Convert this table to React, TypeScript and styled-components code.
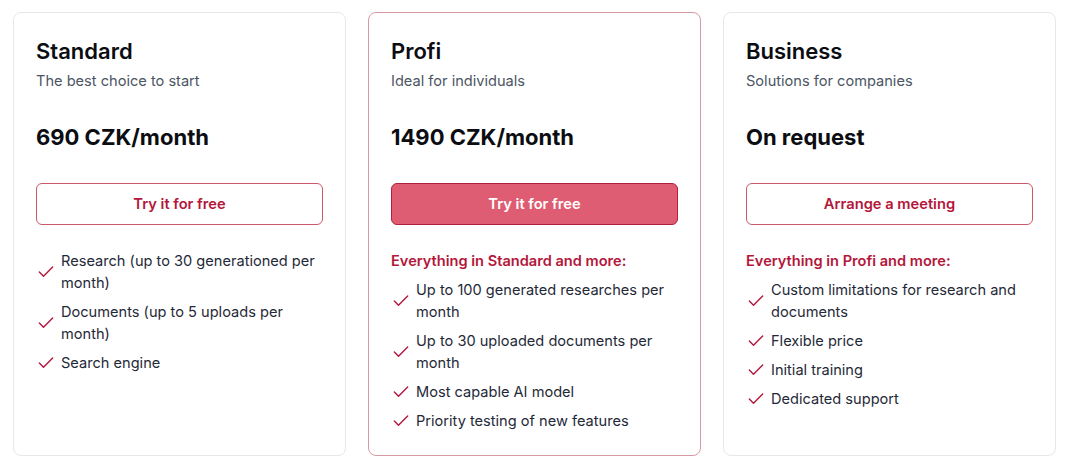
import React from "react";
import styled, { createGlobalStyle, css } from "styled-components";

const GlobalStyle = createGlobalStyle`
  html, body { margin: 0; padding: 0; background: #ffffff; }
  body { font-family: Inter, "Noto Sans", sans-serif; -webkit-font-smoothing: antialiased; }
  * { box-sizing: border-box; }
`;

const Page = styled.div`
  padding: 12px 14px 14px 13px;
  display: grid;
  grid-template-columns: repeat(3, 1fr);
  gap: 22px;
`;

const Card = styled.div<{ $highlight?: boolean }>`
  display: flex;
  flex-direction: column;
  border: 1px solid ${(p) => (p.$highlight ? "#d79aa4" : "#e6e7ea")};
  border-radius: 8px;
  padding: 24px 22px 23px 22px;
  background: #fff;
`;

const Title = styled.h2`
  margin: 0;
  font-size: 22px;
  line-height: 28px;
  font-weight: 600;
  color: #0b0d12;
`;

const Subtitle = styled.p`
  margin: 5px 0 0;
  font-size: 14.6px;
  line-height: 22px;
  color: #4b5563;
`;

const Price = styled.div`
  margin-top: 31px;
  font-size: 22px;
  line-height: 28px;
  font-weight: 700;
  color: #0b0d12;
`;

const Button = styled.button<{ $primary?: boolean }>`
  margin-top: 32px;
  height: 42px;
  width: 100%;
  border-radius: 6px;
  font-family: inherit;
  font-size: 14.7px;
  font-weight: 600;
  cursor: pointer;
  ${(p) =>
    p.$primary
      ? css`
          background: #de5d72;
          border: 1px solid #b3203e;
          color: #ffffff;
        `
      : css`
          background: #ffffff;
          border: 1px solid #cc566b;
          color: #b3173b;
        `}
`;

const Features = styled.div`
  margin-top: 25px;
  display: flex;
  flex-direction: column;
  gap: 7px;
`;

const Lead = styled.div`
  font-size: 14.6px;
  line-height: 22px;
  font-weight: 600;
  color: #b3173b;
`;

const Item = styled.div`
  display: flex;
  align-items: center;
  gap: 5px;
  font-size: 14.6px;
  line-height: 22px;
  color: #1f2937;
`;

const CheckIcon = styled.svg`
  flex: 0 0 20px;
  width: 20px;
  height: 20px;
`;

const Check = () => (
  <CheckIcon viewBox="0 0 24 24" fill="none" stroke="#b3173b" strokeWidth={1.7} strokeLinecap="round" strokeLinejoin="round">
    <path d="M20 6 9 17l-5-5" />
  </CheckIcon>
);

type Plan = {
  title: string;
  subtitle: string;
  price: string;
  cta: string;
  primary?: boolean;
  lead?: string;
  items: string[];
};

const plans: Plan[] = [
  {
    title: "Standard",
    subtitle: "The best choice to start",
    price: "690 CZK/month",
    cta: "Try it for free",
    items: [
      "Research (up to 30 generationed per month)",
      "Documents (up to 5 uploads per month)",
      "Search engine",
    ],
  },
  {
    title: "Profi",
    subtitle: "Ideal for individuals",
    price: "1490 CZK/month",
    cta: "Try it for free",
    primary: true,
    lead: "Everything in Standard and more:",
    items: [
      "Up to 100 generated researches per month",
      "Up to 30 uploaded documents per month",
      "Most capable AI model",
      "Priority testing of new features",
    ],
  },
  {
    title: "Business",
    subtitle: "Solutions for companies",
    price: "On request",
    cta: "Arrange a meeting",
    lead: "Everything in Profi and more:",
    items: [
      "Custom limitations for research and documents",
      "Flexible price",
      "Initial training",
      "Dedicated support",
    ],
  },
];

export default function App() {
  return (
    <>
      <GlobalStyle />
      <Page>
        {plans.map((p) => (
          <Card key={p.title} $highlight={p.primary}>
            <Title>{p.title}</Title>
            <Subtitle>{p.subtitle}</Subtitle>
            <Price>{p.price}</Price>
            <Button $primary={p.primary}>{p.cta}</Button>
            <Features>
              {p.lead && <Lead>{p.lead}</Lead>}
              {p.items.map((it) => (
                <Item key={it}>
                  <Check />
                  <span>{it}</span>
                </Item>
              ))}
            </Features>
          </Card>
        ))}
      </Page>
    </>
  );
}
